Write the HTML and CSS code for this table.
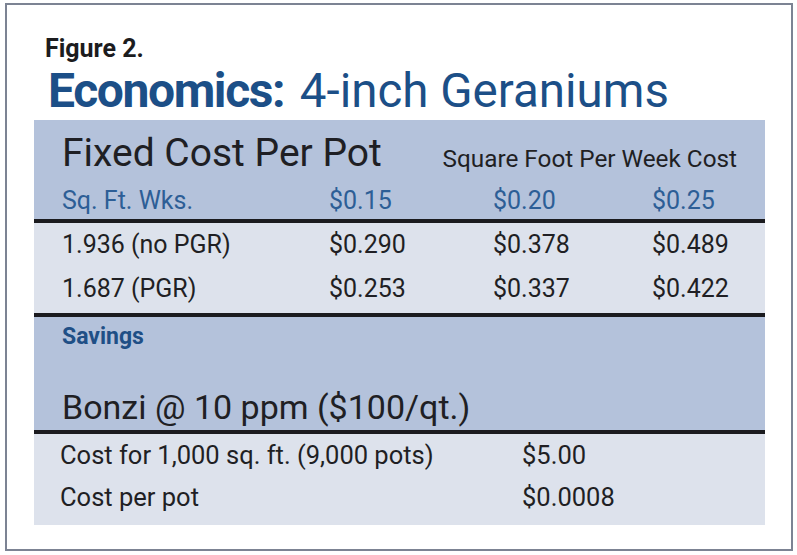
FILE: index.html
```html
<!DOCTYPE html>
<html lang="en">
<head>
<meta charset="utf-8">
<title>Figure 2. Economics: 4-inch Geraniums</title>
<link rel="stylesheet" href="styles.css">
</head>
<body>
<div class="frame">
  <div class="fig-label">Figure 2.</div>
  <h1 class="title"><span class="title-bold">Economics:</span> <span class="title-rest">4-inch Geraniums</span></h1>
  <div class="panel">
    <div class="band band-dark head">
      <div class="head-top">
        <span class="big">Fixed Cost Per Pot</span>
        <span class="sub">Square Foot Per Week Cost</span>
      </div>
      <div class="grid4 col-head">
        <span>Sq. Ft. Wks.</span><span>$0.15</span><span>$0.20</span><span>$0.25</span>
      </div>
    </div>
    <div class="band band-light rows">
      <div class="grid4 row"><span>1.936 (no PGR)</span><span>$0.290</span><span>$0.378</span><span>$0.489</span></div>
      <div class="grid4 row"><span>1.687 (PGR)</span><span>$0.253</span><span>$0.337</span><span>$0.422</span></div>
    </div>
    <div class="band band-dark savings">
      <div class="savings-label">Savings</div>
      <div class="bonzi">Bonzi @ 10 ppm ($100/qt.)</div>
    </div>
    <div class="band band-light bottom">
      <div class="grid2 row2"><span>Cost for 1,000 sq. ft. (9,000 pots)</span><span>$5.00</span></div>
      <div class="grid2 row2"><span>Cost per pot</span><span>$0.0008</span></div>
    </div>
  </div>
</div>
</body>
</html>
```
FILE: styles.css
```css
* { box-sizing: border-box; }
html, body { margin: 0; padding: 0; background: #ffffff; }
body { font-family: Roboto, "Liberation Sans", sans-serif; color: #1f1f24; }

.frame {
  margin: 3px 0 0 5px;
  width: 788px;
  height: 548px;
  border: 2px solid #7c8393;
  padding: 30px 0 0 27px;
}

.fig-label {
  font-weight: 700;
  font-size: 25px;
  line-height: 28px;
  margin-left: 11px;
  color: #1c1c1e;
}

.title {
  margin: 3px 0 0 14px;
  font-size: 47px;
  line-height: 50px;
  font-weight: 400;
  color: #1c4f87;
  height: 50px;
  white-space: nowrap;
}
.title-bold {
  font-weight: 700;
  font-size: 48px;
  letter-spacing: -1.4px;
}
.title-rest {
  margin-left: 4px;
  font-size: 47.5px;
}

.panel {
  margin-top: 4px;
  width: 731px;
}

.band-dark { background: #b4c2db; }
.band-light { background: #dde2ec; }

.head { height: 103px; border-bottom: 4px solid #1b1b1f; padding: 11px 28px 0 28px; }
.head-top { display: flex; justify-content: space-between; align-items: baseline; height: 44px; }
.big { font-size: 39px; line-height: 44px; color: #1f1f24; }
.sub { font-size: 24.3px; line-height: 30px; position: relative; top: 1px; }

.grid4 { display: grid; grid-template-columns: 267px 164px 159px 1fr; }
.col-head { margin-top: 11px; font-size: 25px; line-height: 30px; color: #2d5e96; }

.rows { height: 94px; border-bottom: 4px solid #1b1b1f; padding: 0 28px; }
.row { font-size: 25px; line-height: 44px; }

.savings { height: 117px; border-bottom: 4px solid #1b1b1f; padding: 7px 28px 0 28px; }
.savings-label { font-size: 23px; line-height: 26px; font-weight: 700; color: #1f4f86; }
.bonzi { margin-top: 37px; font-size: 34px; line-height: 40px; color: #1f1f24; }

.bottom { height: 91px; padding: 0 26px; }
.grid2 { display: grid; grid-template-columns: 462px 1fr; }
.row2 { font-size: 25.5px; line-height: 42px; }
```
